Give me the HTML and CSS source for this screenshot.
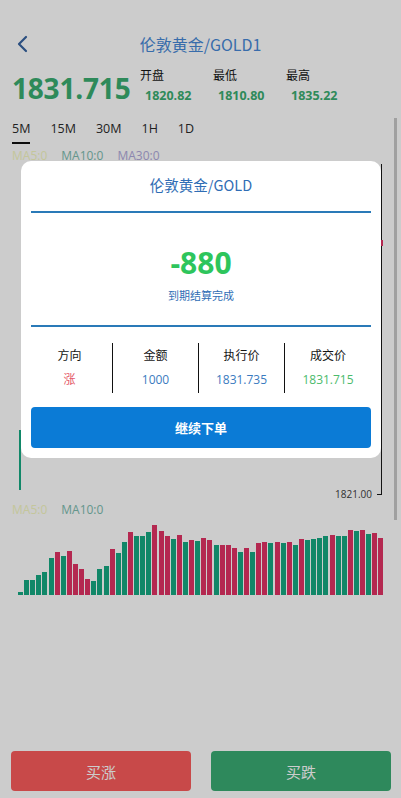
FILE: index.html
```html
<!DOCTYPE html>
<html lang="zh">
<head>
<meta charset="utf-8">
<title>伦敦黄金/GOLD1</title>
<link rel="stylesheet" href="styles.css">
</head>
<body>
<div class="page">
  <header class="topbar">
    <span class="back">
      <svg width="14" height="18" viewBox="0 0 14 18"><path d="M10 2 L3 9 L10 16" fill="none" stroke="#3663a0" stroke-width="2.2" stroke-linecap="round" stroke-linejoin="round"/></svg>
    </span>
    <h1 class="title">伦敦黄金/GOLD1</h1>
  </header>

  <section class="quote">
    <div class="price">1831.715</div>
    <div class="stat"><span class="lbl">开盘</span><span class="val">1820.82</span></div>
    <div class="stat"><span class="lbl">最低</span><span class="val">1810.80</span></div>
    <div class="stat"><span class="lbl">最高</span><span class="val">1835.22</span></div>
  </section>

  <nav class="tabs">
    <span class="tab active">5M</span>
    <span class="tab">15M</span>
    <span class="tab">30M</span>
    <span class="tab">1H</span>
    <span class="tab">1D</span>
  </nav>

  <div class="chart-wrap">
    <div class="ma"><span class="ma5">MA5:0</span><span class="ma10">MA10:0</span><span class="ma30">MA30:0</span></div>
    <div class="kline">
      <svg width="401" height="340" viewBox="0 0 401 340">
        <line x1="381.5" y1="4" x2="381.5" y2="335" stroke="#1a1a1a" stroke-width="1"/>
        <line x1="377" y1="334.5" x2="382" y2="334.5" stroke="#1a1a1a" stroke-width="1"/>
        <rect x="381" y="80" width="2" height="6" fill="#e13264"/>
        <rect x="19" y="270" width="2" height="60" fill="#16a983"/>
        <text x="372" y="338" text-anchor="end" class="axis">1821.00</text>
      </svg>
    </div>
    <div class="ma vol-ma"><span class="ma5">MA5:0</span><span class="ma10">MA10:0</span></div>
    <div class="volume" id="volume"></div>
    <div class="scrollbar"></div>
  </div>

  <footer class="actions">
    <button class="btn up">买涨</button>
    <button class="btn down">买跌</button>
  </footer>
</div>

<div class="mask">
  <div class="modal">
    <div class="m-title">伦敦黄金/GOLD</div>
    <div class="m-line"></div>
    <div class="m-result">
      <div class="m-amount">-880</div>
      <div class="m-status">到期结算完成</div>
    </div>
    <div class="m-line"></div>
    <div class="m-grid">
      <div class="m-col"><span class="m-lbl">方向</span><span class="m-val red">涨</span></div>
      <div class="m-col"><span class="m-lbl">金额</span><span class="m-val blue">1000</span></div>
      <div class="m-col"><span class="m-lbl">执行价</span><span class="m-val blue">1831.735</span></div>
      <div class="m-col"><span class="m-lbl">成交价</span><span class="m-val green">1831.715</span></div>
    </div>
    <button class="m-btn">继续下单</button>
  </div>
</div>

<script>
  var bars = [
    ["g",307],["g",270],["g",270],["g",255],["g",245],["g",205],["r",185],["g",198],["r",182],["r",223],
    ["r",238],["r",268],["g",272],["g",238],["g",227],["r",177],["g",188],["g",155],["r",125],["g",138],
    ["g",137],["g",126],["r",106],["r",123],["r",137],["g",147],["r",135],["g",156],["r",151],["g",153],
    ["r",145],["r",150],["g",166],["r",165],["r",166],["r",174],["g",187],["r",174],["g",187],["r",159],
    ["r",157],["g",160],["r",157],["g",160],["r",156],["g",165],["r",148],["g",151],["g",147],["g",145],
    ["g",138],["r",135],["g",138],["g",138],["r",120],["g",122],["r",121],["g",131],["r",129],["r",143]
  ];
  var vol = document.getElementById("volume");
  bars.forEach(function (b) {
    var d = document.createElement("span");
    d.className = "bar " + (b[0] === "g" ? "bar-g" : "bar-r");
    d.style.height = Math.round((315 - b[1]) / 3) + "px";
    vol.appendChild(d);
  });
</script>
</body>
</html>
```

FILE: styles.css
```css
* { box-sizing: border-box; }
html, body { margin: 0; padding: 0; }
body {
  width: 401px;
  height: 798px;
  overflow: hidden;
  background: #ffffff;
  font-family: "Noto Sans CJK SC", "Open Sans", sans-serif;
  color: #151515;
}
.page {
  height: 798px;
  display: flex;
  flex-direction: column;
}
.topbar {
  height: 46px;
  margin-top: 22px;
  display: flex;
  align-items: center;
  position: relative;
  padding-left: 16px;
}
.back { display: flex; width: 14px; height: 18px; margin-top: -2px; }
.title {
  flex: 1;
  margin: 0;
  text-align: center;
  font-size: 16px;
  font-weight: 400;
  color: #4788d6;
  padding-right: 30px;
  margin-top: -2px;
}
.quote {
  display: flex;
  align-items: flex-start;
  padding-left: 12px;
  margin-top: -1px;
  height: 46px;
}
.price {
  font-family: "Open Sans", sans-serif;
  font-weight: 700;
  font-size: 28px;
  line-height: 36px;
  margin-top: 3px;
  color: #3aad71;
  letter-spacing: -0.2px;
  width: 128px;
}
.stat {
  display: flex;
  flex-direction: column;
  width: 73px;
}
.lbl { font-size: 12px; line-height: 16px; color: #151515; }
.val {
  font-family: "Open Sans", sans-serif;
  font-weight: 700;
  font-size: 12.5px;
  line-height: 18px;
  margin-top: 4px;
  margin-left: 5px;
  color: #3aad71;
}
.tabs {
  display: flex;
  padding-left: 12px;
  height: 28px;
  margin-top: 7px;
}
.tab {
  font-family: "Open Sans", sans-serif;
  font-size: 12.5px;
  line-height: 18px;
  color: #2a2a2a;
  margin-right: 20px;
  height: 24px;
}
.tab.active { border-bottom: 2px solid #111; }
.chart-wrap {
  position: relative;
  flex: 1;
}
.ma {
  display: flex;
  gap: 14px;
  padding-left: 12px;
  font-family: "Open Sans", sans-serif;
  font-size: 12px;
  line-height: 16px;
  height: 16px;
}
.ma5 { color: #f5f8c2; }
.ma10 { color: #7dbcaf; }
.ma30 { color: #afa9db; }
.kline { height: 340px; margin-top: -4px; }
.kline svg { display: block; }
.axis { font-family: "Open Sans", sans-serif; font-size: 10px; fill: #404040; }
.vol-ma { margin-top: 2px; }
.volume {
  display: flex;
  align-items: flex-end;
  gap: 1.12px;
  padding-left: 18px;
  height: 77px;
}
.bar { width: 5px; display: block; }
.bar-g { background: #16a983; }
.bar-r { background: #e13264; }
.scrollbar {
  position: absolute;
  right: 4px;
  top: -30px;
  width: 3px;
  height: 402px;
  background: #c8c8c8;
}
.actions {
  display: flex;
  gap: 20px;
  padding: 0 10px 7px 11px;
}
.btn {
  flex: 1;
  height: 40px;
  border: 0;
  border-radius: 4px;
  color: #ffffff;
  font-family: "Noto Sans CJK SC", sans-serif;
  font-size: 15px;
}
.btn.up { background: #fa5c5c; }
.btn.down { background: #3aac73; }

.mask {
  position: fixed;
  inset: 0;
  background: rgba(0, 0, 0, 0.2);
  display: flex;
  justify-content: center;
  align-items: flex-start;
  padding-top: 161px;
  padding-left: 1px;
}
.modal {
  width: 360px;
  background: #ffffff;
  border-radius: 10px;
  padding: 0 10px 10px;
  display: flex;
  flex-direction: column;
}
.m-title {
  text-align: center;
  font-size: 14.5px;
  line-height: 20px;
  color: #2f6db5;
  padding: 14px 0 16px;
}
.m-line { height: 2px; background: #2a7ab8; }
.m-result {
  height: 112px;
  display: flex;
  flex-direction: column;
  align-items: center;
  padding-top: 30px;
}
.m-amount {
  font-family: "Open Sans", sans-serif;
  font-weight: 700;
  font-size: 30px;
  line-height: 40px;
  color: #2ec55c;
}
.m-status {
  font-size: 11px;
  line-height: 16px;
  color: #2f6db5;
  margin-top: 4px;
}
.m-grid {
  display: grid;
  grid-template-columns: repeat(4, 1fr);
  margin: 16px 0 0 -4px;
}
.m-col {
  display: flex;
  flex-direction: column;
  align-items: center;
  height: 50px;
  border-right: 1px solid #111;
}
.m-col:last-child { border-right: 0; }
.m-lbl { font-size: 12px; line-height: 16px; color: #151515; margin-top: 4px; }
.m-val { font-family: "Open Sans", "Noto Sans CJK SC", sans-serif; font-size: 12px; line-height: 16px; margin-top: 9px; }
.m-val.red { color: #e5596a; }
.m-val.blue { color: #3b7bc0; }
.m-val.green { color: #4cbb6c; }
.m-btn {
  margin-top: 14px;
  height: 41px;
  border: 0;
  border-radius: 4px;
  background: #0b7bd6;
  color: #ffffff;
  font-family: "Noto Sans CJK SC", sans-serif;
  font-weight: 700;
  font-size: 13px;
}
```
